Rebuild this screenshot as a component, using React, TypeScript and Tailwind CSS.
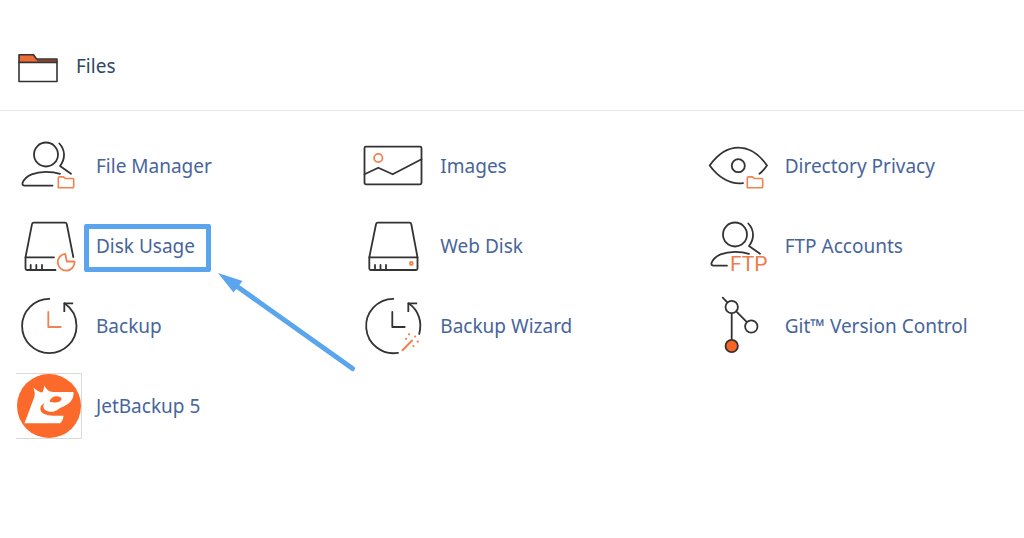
import type { ReactNode } from "react";

const INK = "#333333";
const ORANGE = "#f0834f";
const BLUE = "#5ba5ee";

function Icon({ children }: { children: ReactNode }) {
  return (
    <svg
      viewBox="0 0 64 64"
      className="h-16 w-16 shrink-0"
      fill="none"
      stroke={INK}
      strokeWidth="1.8"
      strokeLinecap="round"
      strokeLinejoin="round"
      aria-hidden="true"
    >
      {children}
    </svg>
  );
}

function Person({ base }: { base: number }) {
  return (
    <>
      <circle cx="29" cy="20.5" r="12" />
      <path d="M42.3 9.5C48.5 16 48.5 25 43 32L54 39.7" />
      <path d={`M${base} 51.6H7.5Q5 51.5 5.5 49C8.5 41 19 37.8 29 37.8C34 37.8 39 38.5 43 39.8`} />
    </>
  );
}

function SmallFolder() {
  return (
    <path
      stroke={ORANGE}
      strokeWidth="1.6"
      d="M41.3 53.8V44Q41.3 42.9 42.4 42.9H46.5L48.3 44.5H55.6Q56.7 44.5 56.7 45.6V52.7Q56.7 53.8 55.6 53.8Z"
    />
  );
}

function FileManagerIcon() {
  return (
    <Icon>
      <Person base={35.5} />
      <SmallFolder />
    </Icon>
  );
}

function FtpIcon() {
  return (
    <Icon>
      <Person base={21} />
      <text
        x="24"
        y="57"
        fill="#ee7c4c"
        stroke="none"
        className="font-['Roboto',sans-serif] text-[21px] font-normal"
      >
        FTP
      </text>
    </Icon>
  );
}

function ImagesIcon() {
  return (
    <Icon>
      <rect x="3.5" y="12.7" width="57" height="37.6" rx="1.5" />
      <path d="M3.5 40.3L17.3 33.7L31.7 40.3L60.5 25.3" />
      <circle cx="17.3" cy="24" r="4.2" stroke={ORANGE} />
    </Icon>
  );
}

function PrivacyIcon() {
  return (
    <Icon>
      <path d="M37 49.2C24 51 12 43 3.7 31.5C12 20 22 13.7 32.3 13.7S53 20 61 31.5Q57.5 36.5 53.5 39.8" />
      <circle cx="32.3" cy="31.7" r="6.5" />
      <SmallFolder />
    </Icon>
  );
}

function DiskUsageIcon() {
  return (
    <Icon>
      <path d="M37 43.3H8.5L15 10.2Q15.3 8.7 16.8 8.7H48Q49.5 8.7 49.8 10.2L56.3 43" />
      <path d="M8.5 43.3V54.5Q8.5 56 10 56H38.5M13.7 51V55.5M19.3 51V55.5M25 51V55.5" />
      <path stroke={ORANGE} d="M48.3 39.8L49.8 47.5H57.5A8.4 8.4 0 1 1 48.3 39.8Z" />
    </Icon>
  );
}

function WebDiskIcon() {
  return (
    <Icon>
      <path d="M8.3 43.3L15 10.2Q15.3 8.7 16.8 8.7H48.5Q50 8.7 50.3 10.2L56.5 43.3Z" />
      <path d="M8.3 43.3V54.5Q8.3 56 9.8 56H55Q56.5 56 56.5 54.5V43.3M14 51V55.5M19.5 51V55.5M25 51V55.5" />
      <circle cx="50.3" cy="49.5" r="1.5" stroke={ORANGE} />
    </Icon>
  );
}

function BackupIcon() {
  return (
    <Icon>
      <path d="M32.3 4.8A27.2 27.2 0 1 0 59.5 32C59.5 22 55 14.5 47.5 9.3" />
      <path d="M47.3 17V9.3H55.3" strokeLinecap="square" />
      <path stroke={ORANGE} d="M31.3 18V33H43.7" />
    </Icon>
  );
}

function BackupWizardIcon() {
  return (
    <Icon>
      <path d="M32.3 4.8A27.2 27.2 0 1 0 37 58.8" />
      <path d="M58.2 40C61.5 28 57.5 16 47.5 9.3" />
      <path d="M47.3 17V9.3H55.3" strokeLinecap="square" />
      <path d="M31.3 18V33H43.7" />
      <path stroke={ORANGE} strokeWidth="2" d="M41.5 56.3L51 46.5" />
      <path
        stroke={ORANGE}
        strokeWidth="2.2"
        d="M48 40.3h.1M54 42.5h.1M45 44.8h.1M56.7 47.7h.1M52.3 52h.1"
      />
    </Icon>
  );
}

function GitIcon() {
  return (
    <Icon>
      <path d="M16.7 3.7L45.3 32.7M25.7 13V52" />
      <circle cx="25.7" cy="13" r="6.2" fill="white" />
      <circle cx="45.3" cy="32.5" r="6.2" fill="white" />
      <circle cx="25.7" cy="52" r="6.2" fill="#fa6423" />
    </Icon>
  );
}

function JetBackupIcon() {
  return (
    <svg viewBox="0 0 66 66" className="-mx-px h-[66px] w-[66px] shrink-0" aria-hidden="true">
      <path d="M0 .5H65.5V65.5H0" fill="white" stroke="#d9d9d9" />
      <circle cx="33" cy="33" r="32" fill="#fb6a2b" />
      {/* Head */}
      <path
        fill="white"
        d="M8.500 50.300L18.500 23.500Q19.300 20 17.500 14.800Q22 19 26.300 19.500Q28 17 28.300 12.500Q31 18.500 37 19H57.500Q58 24 55 28C51 33 45 34 42 36.500C38 39.500 33 39.200 30 37.500C26.500 35.500 27 32 28.500 30C24 32 23 37 26.500 40C30 42.800 38 43 47.500 42.700Q47 48 44 50.300Z"
      />
      {/* Eye */}
      <path
        fill="#fb6a2b"
        d="M33.500 28.800C34.500 22.500 44 21.800 45.500 25.500C45.500 29.500 39 30.500 33.500 28.800Z"
      />
    </svg>
  );
}

function FolderIcon() {
  return (
    <svg
      viewBox="0 0 40 30"
      className="h-[30px] w-10 shrink-0"
      fill="none"
      stroke={INK}
      strokeWidth="1.6"
      strokeLinejoin="round"
      aria-hidden="true"
    >
      <path d="M1 9.5V1.8H15.5L18.5 6H39V9.5Z" fill="#ee6b34" />
      <path d="M19 7.8H38" stroke="#7d4530" />
      <path d="M1 9.5H39V28.500H1Z" fill="white" />
    </svg>
  );
}

function Arrow() {
  return (
    <svg
      viewBox="0 0 144 108"
      className="pointer-events-none absolute top-16 left-[198px] z-10 h-[108px] w-36"
      aria-hidden="true"
    >
      <path d="M20 15L137.5 98.5" stroke={BLUE} strokeWidth="5" strokeLinecap="round" />
      <path d="M3 3L27.5 11L18.5 22.5Z" fill={BLUE} />
    </svg>
  );
}

type Item = { label: string; icon: ReactNode; highlighted?: boolean };

const items: Item[] = [
  { label: "File Manager", icon: <FileManagerIcon /> },
  { label: "Images", icon: <ImagesIcon /> },
  { label: "Directory Privacy", icon: <PrivacyIcon /> },
  { label: "Disk Usage", icon: <DiskUsageIcon />, highlighted: true },
  { label: "Web Disk", icon: <WebDiskIcon /> },
  { label: "FTP Accounts", icon: <FtpIcon /> },
  { label: "Backup", icon: <BackupIcon /> },
  { label: "Backup Wizard", icon: <BackupWizardIcon /> },
  { label: "Git™ Version Control", icon: <GitIcon /> },
  { label: "JetBackup 5", icon: <JetBackupIcon /> },
];

export default function App() {
  return (
    <main className="min-h-screen bg-white font-['Noto_Sans','Open_Sans',sans-serif] text-[19px] leading-7">
      {/* Section heading */}
      <header className="flex items-start gap-[18px] border-b border-[#e6e6e6] pt-[53px] pb-[27px] pl-[18px]">
        <FolderIcon />
        <h1 className="-mt-px text-[#2f4763]">Files</h1>
      </header>

      <ul className="grid grid-cols-3 gap-x-[42px] pt-[15px] pr-4 pl-[17px]">
        {items.map(({ label, icon, highlighted }) => (
          <li key={label} className="relative flex h-20 items-center">
            <a href="#" className="flex items-center gap-[15px] whitespace-nowrap text-[#47659b]">
              {icon}
              <span className="relative">
                {label}
                {highlighted && (
                  <span className="absolute -top-2 -right-4 -bottom-3 -left-3 rounded-xs border-5 border-[#5ba5ee]" />
                )}
              </span>
            </a>
            {highlighted && <Arrow />}
          </li>
        ))}
      </ul>
    </main>
  );
}
